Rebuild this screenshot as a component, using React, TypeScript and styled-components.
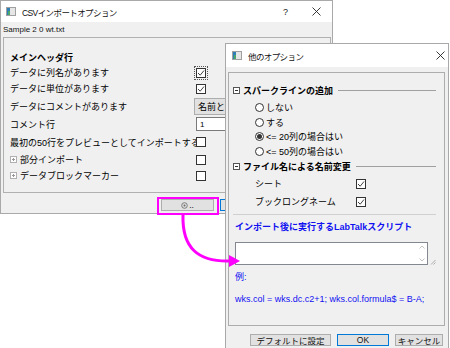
import React from "react";
import styled, { createGlobalStyle } from "styled-components";

const GlobalStyle = createGlobalStyle`
  html, body { margin: 0; padding: 0; background: #fff; }
  body {
    font-family: "Liberation Sans", "Noto Sans CJK JP", sans-serif;
    font-size: 9px;
    color: #000;
  }
  * { box-sizing: border-box; }
`;

const Desktop = styled.div`
  position: relative;
  width: 450px;
  height: 348px;
  overflow: hidden;
  background: #fff;
`;

const Window = styled.div<{ $x: number; $y: number; $w: number; $h: number }>`
  position: absolute;
  left: ${({ $x }) => $x}px;
  top: ${({ $y }) => $y}px;
  width: ${({ $w }) => $w}px;
  height: ${({ $h }) => $h}px;
  background: #f0f0f0;
  border: 1px solid #a9a9a9;
  display: flex;
  flex-direction: column;
`;

const TitleBar = styled.div<{ $h: number; $pl: number }>`
  flex: none;
  height: ${({ $h }) => $h}px;
  background: #fff;
  display: flex;
  align-items: center;
  padding-left: ${({ $pl }) => $pl}px;
`;

const TitleText = styled.span`
  flex: 1;
  margin-left: 6px;
  font-size: 8.5px;
  letter-spacing: -0.6px;
  color: #111;
  white-space: nowrap;
`;

const CaptionButton = styled.span<{ $w: number }>`
  width: ${({ $w }) => $w}px;
  height: 100%;
  display: flex;
  align-items: center;
  justify-content: center;
  font-size: 9px;
  color: #222;
`;

const FileLabel = styled.div`
  height: 15px;
  display: flex;
  align-items: center;
  padding-left: 2px;
  font-size: 8px;
  color: #111;
`;

const GroupPanel = styled.div`
  margin: 0 1px 0 2px;
  height: 156px;
  border: 1px solid #b0b0b0;
  padding: 12px 0 0 6px;
`;

const Row = styled.div<{ $h: number }>`
  height: ${({ $h }) => $h}px;
  display: flex;
  align-items: center;
`;

const Label = styled.span<{ $bold?: boolean; $w?: number }>`
  display: flex;
  align-items: center;
  gap: 3px;
  width: ${({ $w }) => ($w ? `${$w}px` : "auto")};
  flex: none;
  font-weight: ${({ $bold }) => ($bold ? "bold" : "normal")};
  white-space: nowrap;
`;

const Control = styled.div<{ $ml?: number }>`
  display: flex;
  align-items: center;
  margin-left: ${({ $ml }) => $ml ?? 0}px;
`;

const CheckBox = styled.span<{ $focus?: boolean }>`
  display: inline-flex;
  width: 10px;
  height: 10px;
  border: 1px solid #333;
  background: #fff;
  outline: ${({ $focus }) => ($focus ? "1px dotted #555" : "none")};
  outline-offset: 1px;
`;

const ComboBox = styled.div`
  width: 100px;
  height: 17px;
  display: flex;
  align-items: center;
  padding-left: 3px;
  background: #e1e1e1;
  border: 1px solid #adadad;
  white-space: nowrap;
`;

const TextField = styled.div`
  width: 100px;
  height: 14px;
  display: flex;
  align-items: center;
  padding-left: 3px;
  background: #fff;
  border: 1px solid #7a7a7a;
  font-size: 8px;
`;

const Footer = styled.div<{ $mt: number; $pr: number }>`
  display: flex;
  justify-content: flex-end;
  gap: 6px;
  margin-top: ${({ $mt }) => $mt}px;
  padding-right: ${({ $pr }) => $pr}px;
`;

const Button = styled.div<{ $w: number; $focus?: boolean }>`
  width: ${({ $w }) => $w}px;
  height: 12px;
  display: flex;
  align-items: center;
  justify-content: center;
  gap: 1px;
  background: #e1e1e1;
  border: 1px solid ${({ $focus }) => ($focus ? "#0078d7" : "#adadad")};
  font-size: 8.5px;
  color: #111;
  white-space: nowrap;
`;

const OptionsPanel = styled.div`
  margin: 5px 3px 0 2px;
  height: 254px;
  border: 1px solid #adadad;
  display: flex;
  flex-direction: column;
`;

const SectionHeader = styled.div<{ $mt?: number }>`
  height: 16px;
  margin-top: ${({ $mt }) => $mt ?? 0}px;
  display: flex;
  align-items: center;
  gap: 3px;
  padding: 0 8px 0 4px;
  font-weight: bold;
  white-space: nowrap;
`;

const Rule = styled.span`
  flex: 1;
  height: 1px;
  margin-left: 2px;
  background: #a0a0a0;
`;

const RadioList = styled.div`
  padding-top: 2px;
`;

const RadioRow = styled.div`
  height: 14.7px;
  display: flex;
  align-items: center;
  gap: 2px;
  padding-left: 26px;
  white-space: nowrap;
`;

const RadioCircle = styled.span<{ $on?: boolean }>`
  width: 9px;
  height: 9px;
  border: 1px solid #333;
  border-radius: 50%;
  background: #fff;
  display: flex;
  align-items: center;
  justify-content: center;
  &::after {
    content: "";
    width: 5px;
    height: 5px;
    border-radius: 50%;
    background: #333;
    display: ${({ $on }) => ($on ? "block" : "none")};
  }
`;

const CheckRow = styled.div`
  height: 18px;
  display: flex;
  align-items: center;
  padding-left: 26px;
`;

const Divider = styled.div`
  height: 1px;
  margin: 3px 8px 0 4px;
  background: #d0d0d0;
`;

const BlueText = styled.div<{ $mt: number; $bold?: boolean; $h?: number }>`
  height: ${({ $h }) => $h ?? 14}px;
  margin-top: ${({ $mt }) => $mt}px;
  padding-left: 6px;
  display: flex;
  align-items: center;
  color: #1010f0;
  font-weight: ${({ $bold }) => ($bold ? "bold" : "normal")};
  white-space: nowrap;
`;

const ScriptBox = styled.div`
  margin: 7px 0 0 6px;
  display: flex;
  align-items: flex-end;
  gap: 2px;
`;

const ScriptField = styled.div`
  width: 193px;
  height: 23px;
  background: #fff;
  border: 1px solid #828790;
  display: flex;
  justify-content: flex-end;
`;

const ScrollColumn = styled.div`
  width: 10px;
  display: flex;
  flex-direction: column;
  justify-content: space-between;
  align-items: center;
  padding: 2px 0;
`;

const Overlay = styled.svg`
  position: absolute;
  left: 0;
  top: 0;
  pointer-events: none;
`;

const WindowIcon = () => (
  <svg width="10" height="9" viewBox="0 0 10 9">
    <rect x="0.5" y="0.5" width="9" height="8" fill="#e6e6e6" stroke="#a0a0a0" />
    <rect x="1" y="1" width="3" height="7" fill="#2f7fb5" />
    <rect x="2" y="4" width="2" height="4" fill="#49a86a" />
  </svg>
);

const CloseGlyph = () => (
  <svg width="9" height="9" viewBox="0 0 9 9">
    <path d="M0.5 0.5 L8.5 8.5 M8.5 0.5 L0.5 8.5" stroke="#222" strokeWidth="0.9" />
  </svg>
);

const TreeToggle = ({ open }: { open?: boolean }) => (
  <svg width="7" height="7" viewBox="0 0 7 7">
    <rect x="0.5" y="0.5" width="6" height="6" fill="#fff" stroke={open ? "#555" : "#b0b0b0"} />
    <path d="M2 3.5 H5" stroke={open ? "#333" : "#999"} strokeWidth="1" />
    {!open && <path d="M3.5 2 V5" stroke="#999" strokeWidth="1" />}
  </svg>
);

const Check = ({ checked, focus }: { checked?: boolean; focus?: boolean }) => (
  <CheckBox $focus={focus}>
    {checked && (
      <svg width="8" height="8" viewBox="0 0 8 8">
        <polyline points="1,4 3.2,6.2 7,1.5" fill="none" stroke="#444" strokeWidth="1" />
      </svg>
    )}
  </CheckBox>
);

const GearGlyph = () => (
  <svg width="7" height="7" viewBox="0 0 7 7">
    <circle cx="3.5" cy="3.5" r="2.8" fill="none" stroke="#666" strokeWidth="0.8" />
    <circle cx="3.5" cy="3.5" r="1" fill="#666" />
  </svg>
);

const Arrow = ({ dir }: { dir: "up" | "down" }) => (
  <svg width="6" height="4" viewBox="0 0 6 4">
    <path d={dir === "up" ? "M0.5 3.5 L3 1 L5.5 3.5" : "M0.5 0.5 L3 3 L5.5 0.5"} fill="none" stroke="#bbb" strokeWidth="0.9" />
  </svg>
);

const Grip = () => (
  <svg width="6" height="6" viewBox="0 0 6 6">
    <path d="M5.5 1 L1 5.5 M5.5 3.5 L3.5 5.5" stroke="#999" strokeWidth="0.8" />
  </svg>
);

const radios = [
  { label: "しない", on: false },
  { label: "する", on: false },
  { label: "<= 20列の場合はい", on: true },
  { label: "<= 50列の場合はい", on: false },
];

export default function App() {
  return (
    <Desktop>
      <GlobalStyle />
      <Window $x={0} $y={0} $w={333} $h={214}>
        <TitleBar $h={21} $pl={5}>
          <WindowIcon />
          <TitleText>CSVインポートオプション</TitleText>
          <CaptionButton $w={31}>?</CaptionButton>
          <CaptionButton $w={31}>
            <CloseGlyph />
          </CaptionButton>
        </TitleBar>
        <FileLabel>Sample 2 0 wt.txt</FileLabel>
        <GroupPanel>
          <Row $h={15}>
            <Label $bold>メインヘッダ行</Label>
          </Row>
          <Row $h={15}>
            <Label $w={184}>データに列名があります</Label>
            <Control $ml={2}>
              <Check checked focus />
            </Control>
          </Row>
          <Row $h={17}>
            <Label $w={184}>データに単位があります</Label>
            <Control $ml={2}>
              <Check checked />
            </Control>
          </Row>
          <Row $h={18}>
            <Label $w={184}>データにコメントがあります</Label>
            <Control>
              <ComboBox>名前と単位</ComboBox>
            </Control>
          </Row>
          <Row $h={18}>
            <Label $w={184}>コメント行</Label>
            <Control $ml={2}>
              <TextField>1</TextField>
            </Control>
          </Row>
          <Row $h={18}>
            <Label $w={184}>最初の50行をプレビューとしてインポートする</Label>
            <Control $ml={2}>
              <Check />
            </Control>
          </Row>
          <Row $h={17}>
            <Label $w={184}>
              <TreeToggle />
              部分インポート
            </Label>
            <Control $ml={2}>
              <Check />
            </Control>
          </Row>
          <Row $h={15}>
            <Label $w={184}>
              <TreeToggle />
              データブロックマーカー
            </Label>
            <Control $ml={2}>
              <Check />
            </Control>
          </Row>
        </GroupPanel>
        <Footer $mt={6} $pr={2}>
          <Button $w={53}>
            <GearGlyph />
            ..
          </Button>
          {/* OK and cancel sit under the second dialog */}
          <Button $w={52} $focus />
          <Button $w={52} />
        </Footer>
      </Window>

      <Window $x={225} $y={43} $w={224} $h={312}>
        <TitleBar $h={23} $pl={6}>
          <WindowIcon />
          <TitleText>他のオプション</TitleText>
          <CaptionButton $w={15}>
            <CloseGlyph />
          </CaptionButton>
        </TitleBar>
        <OptionsPanel>
          <SectionHeader $mt={9}>
            <TreeToggle open />
            スパークラインの追加
            <Rule />
          </SectionHeader>
          <RadioList>
            {radios.map((r) => (
              <RadioRow key={r.label}>
                <RadioCircle $on={r.on} />
                {r.label}
              </RadioRow>
            ))}
          </RadioList>
          <SectionHeader>
            <TreeToggle open />
            ファイル名による名前変更
            <Rule />
          </SectionHeader>
          <CheckRow>
            <Label $w={101}>シート</Label>
            <Check checked />
          </CheckRow>
          <CheckRow>
            <Label $w={101}>ブックロングネーム</Label>
            <Check checked />
          </CheckRow>
          <Divider />
          <BlueText $mt={4} $h={16} $bold>
            インポート後に実行するLabTalkスクリプト
          </BlueText>
          <ScriptBox>
            <ScriptField>
              <ScrollColumn>
                <Arrow dir="up" />
                <Arrow dir="down" />
              </ScrollColumn>
            </ScriptField>
            <Grip />
          </ScriptBox>
          <BlueText $mt={5}>例:</BlueText>
          <BlueText $mt={8}>wks.col = wks.dc.c2+1; wks.col.formula$ = B-A;</BlueText>
        </OptionsPanel>
        <Footer $mt={8} $pr={5}>
          <Button $w={81}>デフォルトに設定</Button>
          <Button $w={52} $focus>
            OK
          </Button>
          <Button $w={48}>キャンセル</Button>
        </Footer>
      </Window>

      <Overlay width="450" height="348" viewBox="0 0 450 348">
        <rect x="158" y="198" width="60" height="16" fill="none" stroke="#ff00ff" strokeWidth="2" />
        <path d="M183 215 C182 248 198 262 230 261" fill="none" stroke="#ff00ff" strokeWidth="3" />
        <polygon points="229,255 240,261 229,267" fill="#ff00ff" />
      </Overlay>
    </Desktop>
  );
}
